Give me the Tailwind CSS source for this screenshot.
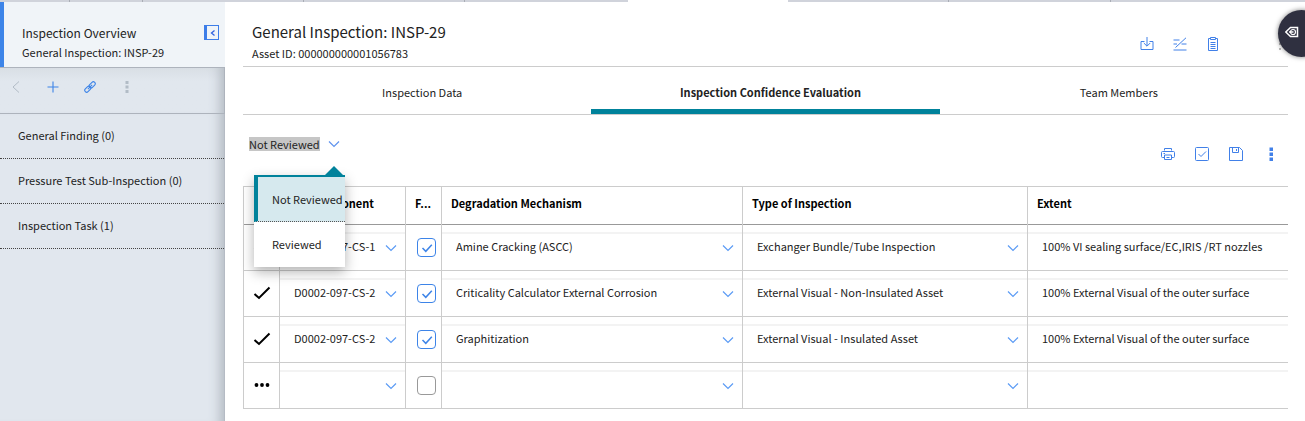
<!DOCTYPE html>
<html lang="en">
<head>
<meta charset="utf-8">
<meta name="viewport" content="width=device-width, initial-scale=1">
<title>General Inspection: INSP-29</title>
<script src="https://cdn.jsdelivr.net/npm/@tailwindcss/browser@4"></script>
</head>
<body class="flex min-h-screen flex-col overflow-x-hidden bg-white font-['Noto_Sans_CJK_SC',sans-serif] text-[11px] text-[#222]">
<svg class="hidden">
  <symbol id="chev" viewBox="0 0 12 8"><path d="M1 1.500 6 6.500 11 1.500" fill="none" stroke="currentColor" stroke-width="1.200"/></symbol>
  <symbol id="tick" viewBox="0 0 12 12"><path d="M1.500 6 4.800 9.300 10.800 2.700" fill="none" stroke="currentColor" stroke-width="1.500"/></symbol>
  <symbol id="bigtick" viewBox="0 0 18 16"><path d="M1.500 9 6 13 16.500 2.500" fill="none" stroke="currentColor" stroke-width="2"/></symbol>
</svg>

<div class="flex h-0.5 bg-[#d0d3db]">
  <div class="w-[70px] border-r border-[#a9adb5]"></div>
  <div class="w-[73px] border-r border-[#a9adb5]"></div>
  <div class="w-[161px] border-r border-[#a9adb5]"></div>
  <div class="w-[161px] border-r border-[#a9adb5]"></div>
  <div class="w-[163px]"></div>
  <div class="w-[160px] bg-white"></div>
  <div class="w-[161px] border-r border-[#a9adb5]"></div>
  <div class="w-[162px] border-r border-[#a9adb5]"></div>
</div>

<div class="flex flex-1">
  <aside class="flex w-[225px] shrink-0 flex-col bg-[#e1e7ee]">
    <header class="flex h-[65px] justify-between border-l-4 border-[#3d84e8] bg-[#f0f4f8] pr-1.5 pl-[18px]">
      <div class="pt-5">
        <h2 class="text-xs leading-[22px]">Inspection Overview</h2>
        <p class="leading-4">General Inspection: INSP-29</p>
      </div>
      <button aria-label="Collapse panel" class="mt-[23px] flex h-[15px] w-[15px] items-center justify-center border border-l-[3px] border-[#3d7de8] text-[#2f62e0]">
        <svg class="size-2" viewBox="0 0 8 8"><path d="M5.500 1.500 2.500 4 5.500 6.500" fill="none" stroke="currentColor" stroke-width="1.300"/></svg>
      </button>
    </header>
    <div class="flex h-[47px] items-center border-t border-r border-b border-[#adb3bc] bg-linear-to-b from-[#d9dfe5] to-[#e1e7ee] to-30% pb-2 pl-2.5 text-[#3d84e8] shadow-[inset_-14px_0_12px_-10px_#b3bac2]">
      <button aria-label="Back" class="flex w-3 justify-center text-[#b2bcc6]"><svg class="h-3.5 w-3" viewBox="0 0 12 14"><path d="M9 1.500 3 7 9 12.500" fill="none" stroke="currentColor"/></svg></button>
      <button aria-label="Add" class="ml-[25px] flex w-3 justify-center"><svg class="size-3" viewBox="0 0 12 12"><path d="M6 .500V11.500M.500 6H11.500" stroke="currentColor" stroke-width="1.100"/></svg></button>
      <button aria-label="Link" class="ml-[25px] flex w-3 justify-center"><svg class="size-3" viewBox="0 0 12 12"><g fill="none" stroke="currentColor" stroke-width="1.100" transform="rotate(-45 6 6)"><rect x="-.6" y="4.100" width="7" height="3.800" rx="1.900"/><rect x="5.600" y="4.100" width="7" height="3.800" rx="1.900"/><path d="M3 6H9"/></g></svg></button>
      <button aria-label="More" class="ml-[25px] flex w-3 justify-center text-[#b2bcc6]"><svg class="h-3 w-1" viewBox="0 0 4 12" fill="currentColor"><path d="M.5 0h3v3h-3zM.5 4.500h3v3h-3zM.5 9h3v3h-3z"/></svg></button>
    </div>
    <nav class="flex-1 border-r border-[#b5bbc4] shadow-[inset_-14px_0_12px_-10px_#b3bac2]">
      <ul>
        <li><a href="#finding" class="block h-[45px] border-b border-dotted border-[#444] pt-3 pl-[18px] leading-[18px]">General Finding (0)</a></li>
        <li><a href="#pressure" class="block h-[45px] border-b border-dotted border-[#444] pt-3 pl-[18px] leading-[18px]">Pressure Test Sub-Inspection (0)</a></li>
        <li><a href="#task" class="block h-[45px] border-b border-dotted border-[#444] pt-3 pl-[18px] leading-[18px]">Inspection Task (1)</a></li>
      </ul>
    </nav>
  </aside>

  <main class="min-w-0 flex-1 pr-[17px] pl-[18px]">
    <header class="flex h-[65px] justify-between border-b border-[#ccc] pl-[9px]">
      <div class="pt-[18px]">
        <h1 class="text-[15px] leading-6">General Inspection: INSP-29</h1>
        <p class="leading-[18px]">Asset ID: 000000000001056783</p>
      </div>
      <div class="flex items-start gap-[19px] pt-[35px] pr-[5px] text-[#4180e8]">
        <button aria-label="Download"><svg class="size-3.5" viewBox="0 0 14 14"><path d="M4.500 4.500H1V12.500H13V4.500H9.500M7 0V9M3.800 6 7 9.200 10.200 6" fill="none" stroke="currentColor"/></svg></button>
        <button aria-label="Compare"><svg class="size-3.5" viewBox="0 0 14 14"><path d="M.5 3H6.500M.5 7H4M8.500 7H13.500M.5 13H13.500M2.500 10.500 13 .8" fill="none" stroke="currentColor"/></svg></button>
        <button aria-label="Clipboard"><svg class="size-3.5" viewBox="0 0 14 14"><path d="M4.500 1.500H2.500V13.500H11.500V1.500H9.500M4.500 .500H9.500V2.500H4.500ZM4.500 5.500H9.500M4.500 7.500H9.500M4.500 9.500H9.500M4.500 11.500H9.500" fill="none" stroke="currentColor"/></svg></button>
        <button aria-label="More" class="ml-10 text-[#bbb]"><svg class="h-3.5 w-1" viewBox="0 0 4 14" fill="currentColor"><path d="M0 1h2v2H0zM0 6h2v2H0zM0 11h2v2H0z"/></svg></button>
      </div>
    </header>
    <nav class="grid h-12 grid-cols-3 border-b border-[#ccc] text-center">
      <a href="#data" class="pt-4 pl-2.5 leading-[18px]">Inspection Data</a>
      <a href="#evaluation" aria-current="page" class="border-b-5 border-[#00829b] pt-4 pl-2.5 leading-[18px] font-bold">Inspection Confidence Evaluation</a>
      <a href="#team" class="pt-4 pl-2.5 leading-[18px]">Team Members</a>
    </nav>

    <div class="flex h-[71px] items-start justify-between pt-[22px] pl-1.5">
      <div class="relative">
        <button aria-haspopup="listbox" aria-expanded="true" class="flex items-center gap-2 leading-[18px]">
          <span class="h-3.5 bg-[#c6c6c6] leading-[14px]">Not Reviewed</span>
          <svg class="h-2 w-3 text-[#5f93ee]"><use href="#chev"/></svg>
        </button>
        <div class="absolute top-[38px] left-[5px] w-[91px] border-t-2 border-[#00829b] bg-white shadow-[0_5px_12px_rgba(0,0,0,.3)]">
          <svg class="absolute -top-[11px] left-[70px] h-2.5 w-5 text-[#00829b]" viewBox="0 0 20 10"><path d="M0 10 10 0 20 10z" fill="currentColor"/></svg>
          <ul role="listbox" aria-label="Review state" class="whitespace-nowrap">
            <li role="option" aria-selected="true" class="h-[45px] border-b border-l-4 border-b-[#555] border-l-[#00829b] bg-[#d6e9ee] pt-3 pl-3.5 leading-[20px] [border-bottom-style:dotted]">Not Reviewed</li>
            <li role="option" aria-selected="false" class="h-[45px] pt-3 pl-[18px] leading-[20px]">Reviewed</li>
          </ul>
        </div>
      </div>
      <div class="flex items-start gap-5 pt-2.5 pr-[9px] text-[#4180e8]">
        <button aria-label="Print"><svg class="size-3.5" viewBox="0 0 14 14"><path d="M3.500 3.500V1.500H10.500V3.500M3.500 10.500H1.500Q.500 10.500 .500 9.500V5.500Q.500 4.500 1.500 4.500H12.500Q13.500 4.500 13.500 5.500V9.500Q13.500 10.500 12.500 10.500H10.500M3.500 8V12.500H10.500V8ZM5.500 10.500H8.500M2.500 6.500H4" fill="none" stroke="currentColor"/></svg></button>
        <button aria-label="Select all"><svg class="size-3.5" viewBox="0 0 14 14"><path d="M1.500 .500H12.500Q13.500 .500 13.500 1.500V12.500Q13.500 13.500 12.500 13.500H1.500Q.500 13.500 .500 12.500V1.500Q.500 .500 1.500 .500ZM3.500 7 6 9.500 11 4.500" fill="none" stroke="currentColor"/></svg></button>
        <button aria-label="Save"><svg class="size-3.5" viewBox="0 0 14 14"><path d="M.5 .500H10.500L13.500 3.500V13.500H.500ZM3.500 .500V5.500H9.500V.500M7.500 2V4" fill="none" stroke="currentColor"/></svg></button>
        <button aria-label="More"><svg class="h-3.5 w-4" viewBox="0 0 16 14" fill="currentColor"><path d="M6.500 0.500h3.500v3.500H6.500zM6.500 5.500h3.500v3.500H6.500zM6.500 10.500h3.500v3.500H6.500z"/></svg></button>
      </div>
    </div>

    <table class="w-full table-fixed border-collapse">
      <colgroup><col class="w-9"><col class="w-[126px]"><col class="w-9"><col class="w-[301px]"><col class="w-[285px]"><col></colgroup>
      <thead>
        <tr class="h-[38px] border-t border-b border-t-[#ccc] border-b-[#999] text-left text-black [&>th]:border-l [&>th]:border-l-[#ccc] [&>th]:pb-1 [&>th]:pl-[9px]">
          <th><span class="sr-only">State</span></th><th>RBI Component</th><th>F...</th><th>Degradation Mechanism</th><th>Type of Inspection</th><th>Extent</th>
        </tr>
      </thead>
      <tbody id="rows"></tbody>
    </table>
  </main>
</div>

<button aria-label="Open guide" class="absolute top-2.5 right-[-20px] flex size-[47px] items-center rounded-full bg-[#2f3040] pb-[3px] pl-[7px] text-white shadow-[0_0_5px_rgba(0,0,0,.5)]">
  <svg class="h-3 w-3.5" viewBox="0 0 14 12"><path d="M.8 6 5.500 1.500H12.500V10.500H5.500Z" fill="none" stroke="currentColor" stroke-width="1.500"/><circle cx="8" cy="6" r="2.500" fill="none" stroke="currentColor" stroke-width="1.200"/><path d="M4 6H8.500" stroke="currentColor" stroke-width="1.500"/></svg>
</button>

<script>
const rows = [
  ['D0002-097-CS-1', 'Amine Cracking (ASCC)', 'Exchanger Bundle/Tube Inspection', '100% VI sealing surface/EC,IRIS /RT nozzles'],
  ['D0002-097-CS-2', 'Criticality Calculator External Corrosion', 'External Visual - Non-Insulated Asset', '100% External Visual of the outer surface'],
  ['D0002-097-CS-2', 'Graphitization', 'External Visual - Insulated Asset', '100% External Visual of the outer surface'],
  ['', '', '', '']
];
const pick = (v, label) => `<div class="grid h-[38px] items-start border-t-2 border-[#f3f3f3]">
  <select aria-label="${label}" class="col-start-1 row-start-1 mt-0.5 h-5 w-full appearance-none bg-transparent pl-3.5 leading-5"><option>${v}</option></select>
  <svg class="pointer-events-none col-start-1 row-start-1 mt-2.5 mr-2 h-2 w-3 justify-self-end text-[#5b9bf5]"><use href="#chev"/></svg></div>`;
document.getElementById('rows').innerHTML = rows.map(([c, d, t, e], i) => {
  const on = c !== '';
  return `<tr class="h-[46px] border-b border-[#ccc] [&>td]:border-l [&>td]:border-l-[#ccc] [&>td]:p-0 [&>td]:align-bottom">
    <td class="text-black"><div class="flex h-[38px] justify-center pt-[7px]">${on
      ? '<svg class="h-4 w-[18px]"><use href="#bigtick"/></svg>'
      : '<svg class="mt-1.5 h-1 w-4" viewBox="0 0 16 4" fill="currentColor"><circle cx="2.500" cy="2" r="1.900"/><circle cx="8" cy="2" r="1.900"/><circle cx="13.500" cy="2" r="1.900"/></svg>'}</div></td>
    <td>${pick(c, 'Component')}</td>
    <td><label class="grid h-[38px] items-start pt-1.5 pl-[11px]"><input type="checkbox" aria-label="Flag row ${i + 1}" ${on ? 'checked' : ''} class="col-start-1 row-start-1 size-[19px] appearance-none rounded border border-[#999] bg-white checked:border-[#3d84e8]">
      ${on ? '<svg class="pointer-events-none col-start-1 row-start-1 mt-1 ml-1 size-3 text-[#3d84e8]"><use href="#tick"/></svg>' : ''}</label></td>
    <td>${pick(d, 'Degradation mechanism')}</td>
    <td>${pick(t, 'Type of inspection')}</td>
    <td><div class="flex h-[38px] border-t-2 border-[#f3f3f3]"><input type="text" aria-label="Extent" value="${e}" class="mt-0.5 h-5 w-full pl-3.5 leading-5"></div></td>
  </tr>`;
}).join('');
</script>
</body>
</html>
